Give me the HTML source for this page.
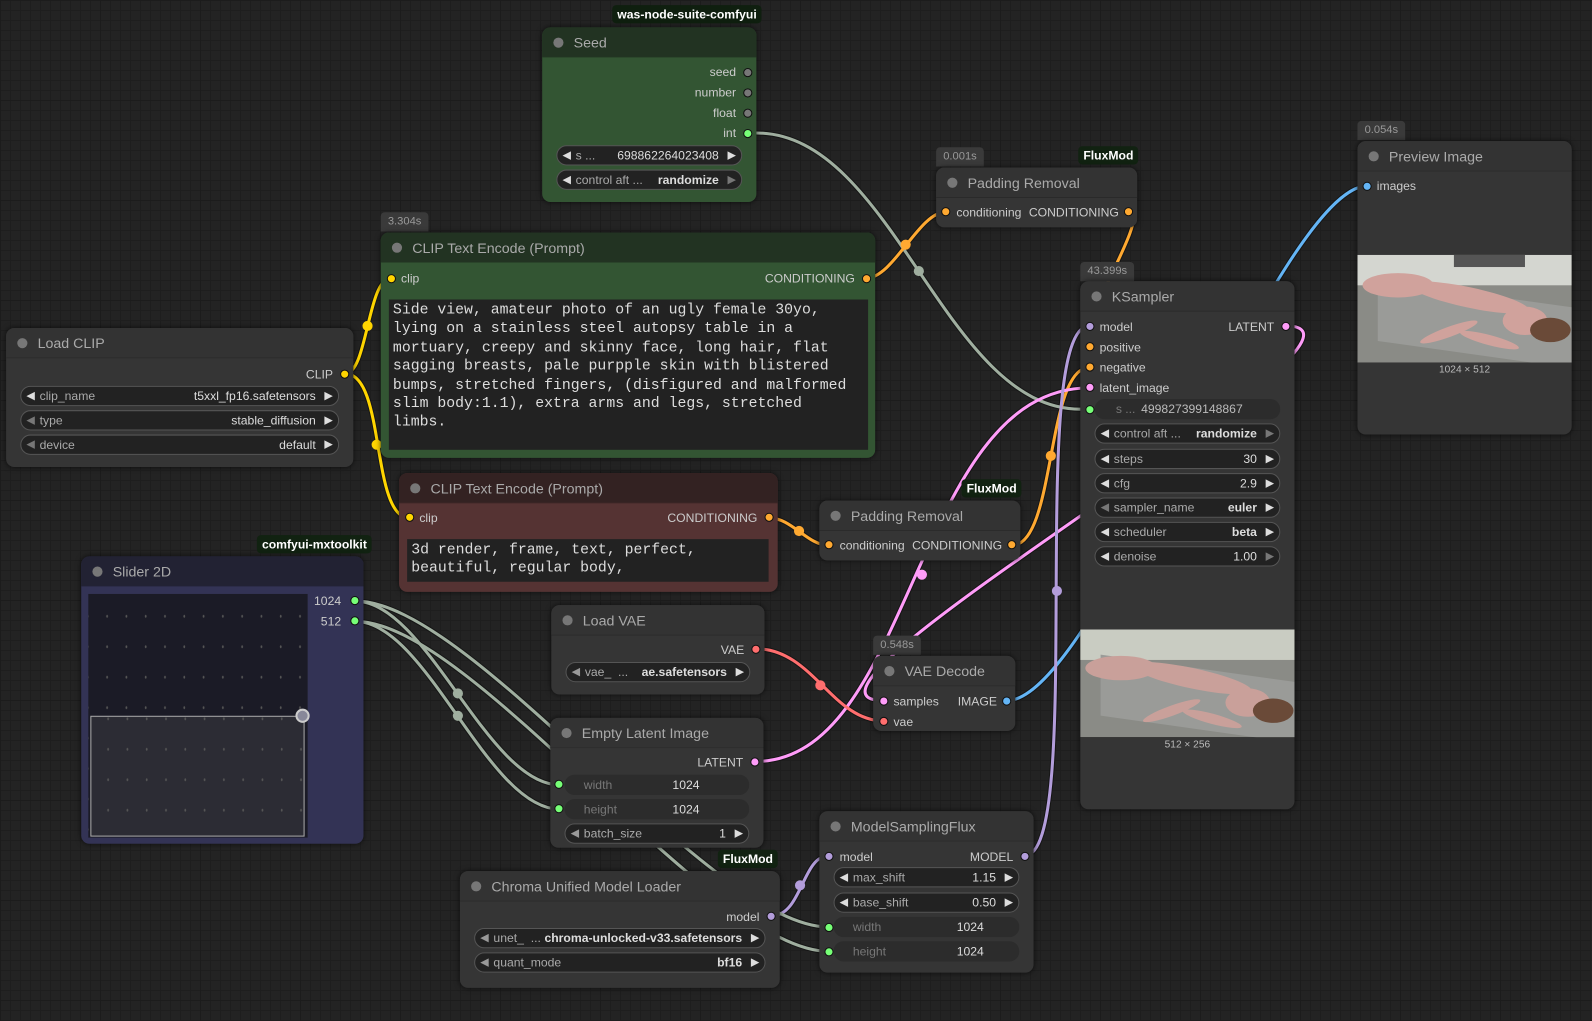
<!DOCTYPE html>
<html><head><meta charset="utf-8"><style>
*{box-sizing:border-box;margin:0;padding:0}
body{width:1592px;height:1021px;overflow:hidden;background:#222;font-family:"Liberation Sans",Arial,sans-serif;position:relative;
background-image:linear-gradient(#1c1c1c 1px,transparent 1px),linear-gradient(90deg,#1c1c1c 1px,transparent 1px),linear-gradient(#1e1e1e 1px,transparent 1px),linear-gradient(90deg,#1e1e1e 1px,transparent 1px);
background-size:100px 100px,100px 100px,10px 10px,10px 10px;background-color:#232323}
#root{position:absolute;left:0;top:0;width:1568px;height:1006px;transform:scale(1.0153);transform-origin:0 0}
.n{position:absolute;background:#353535;border-radius:8px;box-shadow:0 0 5px rgba(0,0,0,.6)}
.t{position:absolute;left:0;right:0;top:0;height:30px;background:#333;border-radius:8px 8px 0 0;border-bottom:1px solid #2b2b2b;color:#aaa;font-size:14px;line-height:30px;padding-left:31px}
.t:before{content:"";position:absolute;left:11px;top:10px;width:10px;height:10px;border-radius:50%;background:#777}
.s{position:absolute;font-size:12px;color:#ccc;white-space:nowrap;line-height:14px}
.d{position:absolute;width:9px;height:9px;border-radius:50%;border:1px solid #111}
.w{position:absolute;height:20px;border-radius:10px;background:#222;border:1px solid #555;font-size:12px;line-height:18px;color:#ddd;white-space:nowrap}
.w .l{position:absolute;left:18px;color:#aaa}
.w .v{position:absolute;right:22px;color:#ddd}
.w .a{position:absolute;left:5px;font-size:11px;color:#ddd}
.w .b{position:absolute;right:5px;font-size:11px;color:#ddd}
.w.f{border-color:transparent;background:#2c2c2c}
.w.f .l{color:#777}
.bd{position:absolute;height:18px;background:#112211;color:#fff;font-weight:bold;font-size:12px;line-height:18px;padding:0 5px;border-radius:4px}
.tm{position:absolute;height:19px;background:#3a3a3a;color:#999;font-size:11px;line-height:19px;padding:0 7px;border-radius:4px 4px 0 0}
.ta{position:absolute;background:#222;font-family:"Liberation Mono",monospace;font-size:14.6px;line-height:18.4px;color:#ddd;padding:2px 4px;white-space:pre}
svg.wires{position:absolute;left:0;top:0}
</style></head><body><div id="root">
<svg class="wires" width="1568" height="1006" viewBox="0 0 1568 1006" fill="none" stroke-linecap="round">
<g stroke="#111" stroke-width="5" opacity=".7">
<path d="M745,131 C880,131 930,403 1064,403"/>
<path d="M340,368 C362,368 362,274 385,274"/>
<path d="M340,368 C380,368 365,510 403,510"/>
<path d="M853,274 C880,274 905,209 931,209"/>
<path d="M757,510 C780,510 795,537 816,537"/>
<path d="M1112,209 C1137,209 1048,341 1073,341"/>
<path d="M997,537 C1040,537 1030,362 1073,362"/>
<path d="M744,750 C900,750 900,382 1073,382"/>
<path d="M1266,321 C1400,321 736,690 870,690"/>
<path d="M745,639 C800,639 820,710 870,710"/>
<path d="M992,690 C1080,690 1260,183 1347,183"/>
<path d="M1009,843 C1070,843 1010,321 1073,321"/>
<path d="M760,902 C790,902 790,843 816,843"/>
<path d="M350,592 C420,592 480,773 551,773"/>
<path d="M350,592 C466,592 700,913 816,913"/>
<path d="M350,612 C420,612 480,797 551,797"/>
<path d="M350,612 C466,612 700,937 816,937"/>
</g>
<g stroke-width="3">
<path stroke="#9fae9f" d="M745,131 C880,131 930,403 1064,403"/>
<path stroke="#ffd500" d="M340,368 C362,368 362,274 385,274"/>
<path stroke="#ffd500" d="M340,368 C380,368 365,510 403,510"/>
<path stroke="#ffa931" d="M853,274 C880,274 905,209 931,209"/>
<path stroke="#ffa931" d="M757,510 C780,510 795,537 816,537"/>
<path stroke="#ffa931" d="M1112,209 C1137,209 1048,341 1073,341"/>
<path stroke="#ffa931" d="M997,537 C1040,537 1030,362 1073,362"/>
<path stroke="#ff9cf9" d="M744,750 C900,750 900,382 1073,382"/>
<path stroke="#ff9cf9" d="M1266,321 C1400,321 736,690 870,690"/>
<path stroke="#ff6e6e" d="M745,639 C800,639 820,710 870,710"/>
<path stroke="#64b5f6" d="M992,690 C1080,690 1260,183 1347,183"/>
<path stroke="#b39ddb" d="M1009,843 C1070,843 1010,321 1073,321"/>
<path stroke="#b39ddb" d="M760,902 C790,902 790,843 816,843"/>
<path stroke="#9fae9f" d="M350,592 C420,592 480,773 551,773"/>
<path stroke="#9fae9f" d="M350,592 C466,592 700,913 816,913"/>
<path stroke="#9fae9f" d="M350,612 C420,612 480,797 551,797"/>
<path stroke="#9fae9f" d="M350,612 C466,612 700,937 816,937"/>
</g>
<g stroke="none">
<circle cx="905" cy="267" r="5" fill="#9fae9f"/><circle cx="362" cy="321" r="5" fill="#ffd500"/><circle cx="371" cy="438" r="5" fill="#ffd500"/>
<circle cx="892" cy="241" r="5" fill="#ffa931"/><circle cx="787" cy="523" r="5" fill="#ffa931"/><circle cx="1035" cy="449" r="5" fill="#ffa931"/>
<circle cx="908" cy="566" r="5" fill="#ff9cf9"/><circle cx="808" cy="675" r="5" fill="#ff6e6e"/><circle cx="1041" cy="582" r="5" fill="#b39ddb"/>
<circle cx="788" cy="872" r="5" fill="#b39ddb"/><circle cx="451" cy="683" r="5" fill="#9fae9f"/><circle cx="451" cy="705" r="5" fill="#9fae9f"/>
</g>
</svg>

<!-- Seed -->
<div class="bd" style="left:603px;top:5px;background:#0f1f0f">was-node-suite-comfyui</div>
<div class="n" style="left:534px;top:27px;width:211px;height:172px;background:#335533">
<div class="t" style="background:#223322;border-color:#2a442a">Seed</div>
<div class="s" style="right:20px;top:37px">seed</div><div class="d" style="right:4px;top:40px;background:#777"></div>
<div class="s" style="right:20px;top:57px">number</div><div class="d" style="right:4px;top:60px;background:#777"></div>
<div class="s" style="right:20px;top:77px">float</div><div class="d" style="right:4px;top:80px;background:#777"></div>
<div class="s" style="right:20px;top:97px">int</div><div class="d" style="right:4px;top:100px;background:#7f7"></div>
<div class="w" style="left:14px;right:14px;top:116px"><span class="a">◀</span><span class="l">s ...</span><span class="v">698862264023408</span><span class="b">▶</span></div>
<div class="w" style="left:14px;right:14px;top:140px"><span class="a">◀</span><span class="l">control aft ...</span><span class="v" style="font-weight:bold">randomize</span><span class="b" style="color:#777">▶</span></div>
</div>

<!-- CLIP Text Encode + -->
<div class="tm" style="left:375px;top:209px">3.304s</div>
<div class="n" style="left:375px;top:229px;width:487px;height:222px;background:#335533">
<div class="t" style="background:#223322;border-color:#2a442a">CLIP Text Encode (Prompt)</div>
<div class="d" style="left:6px;top:41px;background:#ffd500"></div><div class="s" style="left:20px;top:38px">clip</div>
<div class="s" style="right:20px;top:38px">CONDITIONING</div><div class="d" style="right:4px;top:41px;background:#ffa931"></div>
<div class="ta" style="left:8px;top:66px;width:472px;height:148px">Side view, amateur photo of an ugly female 30yo,
lying on a stainless steel autopsy table in a
mortuary, creepy and skinny face, long hair, flat
sagging breasts, pale purpple skin with blistered
bumps, stretched fingers, (disfigured and malformed
slim body:1.1), extra arms and legs, stretched
limbs.</div>
</div>

<!-- Load CLIP -->
<div class="n" style="left:6px;top:323px;width:342px;height:137px">
<div class="t">Load CLIP</div>
<div class="s" style="right:20px;top:39px">CLIP</div><div class="d" style="right:4px;top:41px;background:#ffd500"></div>
<div class="w" style="left:14px;right:14px;top:57px"><span class="a">◀</span><span class="l">clip_name</span><span class="v">t5xxl_fp16.safetensors</span><span class="b">▶</span></div>
<div class="w" style="left:14px;right:14px;top:81px"><span class="a" style="color:#777">◀</span><span class="l">type</span><span class="v">stable_diffusion</span><span class="b">▶</span></div>
<div class="w" style="left:14px;right:14px;top:105px"><span class="a" style="color:#777">◀</span><span class="l">device</span><span class="v">default</span><span class="b">▶</span></div>
</div>

<!-- CLIP Text Encode - -->
<div class="n" style="left:393px;top:466px;width:373px;height:117px;background:#553333">
<div class="t" style="background:#332222;border-color:#442a2a">CLIP Text Encode (Prompt)</div>
<div class="d" style="left:6px;top:39px;background:#ffd500"></div><div class="s" style="left:20px;top:37px">clip</div>
<div class="s" style="right:20px;top:37px">CONDITIONING</div><div class="d" style="right:4px;top:39px;background:#ffa931"></div>
<div class="ta" style="left:8px;top:65px;width:356px;height:42px">3d render, frame, text, perfect,
beautiful, regular body,</div>
</div>

<!-- Slider 2D -->
<div class="bd" style="left:253px;top:527px">comfyui-mxtoolkit</div>
<div class="n" style="left:80px;top:548px;width:278px;height:283px;background:#333355">
<div class="t" style="background:#222233;border-color:#2a2a44">Slider 2D</div>
<div class="s" style="right:22px;top:37px">1024</div><div class="d" style="right:4px;top:39px;background:#7f7"></div>
<div class="s" style="right:22px;top:57px">512</div><div class="d" style="right:4px;top:59px;background:#7f7"></div>
<div style="position:absolute;left:7px;top:37px;width:216px;height:240px;background:#1b1b26;background-image:radial-gradient(#555 0.7px,transparent 1.1px);background-size:19px 30px;background-position:9px 7px"></div>
<div style="position:absolute;left:9px;top:157px;width:211px;height:119px;background:#2c2c34;border:1.5px solid #aaa;background-image:radial-gradient(#555 0.7px,transparent 1.1px);background-size:19px 30px;background-position:7px 17px"></div>
<div style="position:absolute;left:211px;top:150px;width:14px;height:14px;border-radius:50%;background:#889;border:2px solid #ccc"></div>
</div>

<!-- Load VAE -->
<div class="n" style="left:543px;top:596px;width:210px;height:88px">
<div class="t">Load VAE</div>
<div class="s" style="right:20px;top:37px">VAE</div><div class="d" style="right:4px;top:39px;background:#ff6e6e"></div>
<div class="w" style="left:14px;right:14px;top:56px"><span class="a" style="color:#999">◀</span><span class="l">vae_ &nbsp;...</span><span class="v" style="font-weight:bold">ae.safetensors</span><span class="b">▶</span></div>
</div>

<!-- Empty Latent -->
<div class="n" style="left:542px;top:707px;width:210px;height:128px">
<div class="t">Empty Latent Image</div>
<div class="s" style="right:20px;top:37px">LATENT</div><div class="d" style="right:4px;top:39px;background:#ff9cf9"></div>
<div class="d" style="left:4px;top:61px;background:#7f7"></div>
<div class="w f" style="left:14px;right:14px;top:56px"><span class="l">width</span><span class="v" style="right:48px">1024</span></div>
<div class="d" style="left:4px;top:85px;background:#7f7"></div>
<div class="w f" style="left:14px;right:14px;top:80px"><span class="l">height</span><span class="v" style="right:48px">1024</span></div>
<div class="w" style="left:14px;right:14px;top:104px"><span class="a" style="color:#999">◀</span><span class="l">batch_size</span><span class="v">1</span><span class="b">▶</span></div>
</div>

<!-- Chroma -->
<div class="bd" style="left:707px;top:837px">FluxMod</div>
<div class="n" style="left:453px;top:858px;width:315px;height:115px">
<div class="t">Chroma Unified Model Loader</div>
<div class="s" style="right:20px;top:38px">model</div><div class="d" style="right:4px;top:40px;background:#b39ddb"></div>
<div class="w" style="left:14px;right:14px;top:56px"><span class="a" style="color:#999">◀</span><span class="l">unet_ &nbsp;...</span><span class="v" style="font-weight:bold">chroma-unlocked-v33.safetensors</span><span class="b">▶</span></div>
<div class="w" style="left:14px;right:14px;top:80px"><span class="a" style="color:#999">◀</span><span class="l">quant_mode</span><span class="v" style="font-weight:bold">bf16</span><span class="b">▶</span></div>
</div>

<!-- Padding Removal 1 -->
<div class="tm" style="left:922px;top:145px">0.001s</div>
<div class="bd" style="left:1062px;top:144px">FluxMod</div>
<div class="n" style="left:922px;top:165px;width:198px;height:59px">
<div class="t">Padding Removal</div>
<div class="d" style="left:5px;top:39px;background:#ffa931"></div><div class="s" style="left:20px;top:37px">conditioning</div>
<div class="s" style="right:18px;top:37px">CONDITIONING</div><div class="d" style="right:4px;top:39px;background:#ffa931"></div>
</div>

<!-- Padding Removal 2 -->
<div class="bd" style="left:947px;top:472px">FluxMod</div>
<div class="n" style="left:807px;top:493px;width:198px;height:59px">
<div class="t">Padding Removal</div>
<div class="d" style="left:5px;top:39px;background:#ffa931"></div><div class="s" style="left:20px;top:37px">conditioning</div>
<div class="s" style="right:18px;top:37px">CONDITIONING</div><div class="d" style="right:4px;top:39px;background:#ffa931"></div>
</div>

<!-- VAE Decode -->
<div class="tm" style="left:860px;top:626px">0.548s</div>
<div class="n" style="left:860px;top:646px;width:140px;height:74px">
<div class="t">VAE Decode</div>
<div class="d" style="left:6px;top:40px;background:#ff9cf9"></div><div class="s" style="left:20px;top:38px">samples</div>
<div class="s" style="right:18px;top:38px">IMAGE</div><div class="d" style="right:4px;top:40px;background:#64b5f6"></div>
<div class="d" style="left:6px;top:60px;background:#ff6e6e"></div><div class="s" style="left:20px;top:58px">vae</div>
</div>

<!-- ModelSamplingFlux -->
<div class="n" style="left:807px;top:799px;width:211px;height:159px">
<div class="t">ModelSamplingFlux</div>
<div class="d" style="left:5px;top:40px;background:#b39ddb"></div><div class="s" style="left:20px;top:38px">model</div>
<div class="s" style="right:20px;top:38px">MODEL</div><div class="d" style="right:4px;top:40px;background:#b39ddb"></div>
<div class="w" style="left:14px;right:14px;top:55px"><span class="a">◀</span><span class="l">max_shift</span><span class="v">1.15</span><span class="b">▶</span></div>
<div class="w" style="left:14px;right:14px;top:80px"><span class="a">◀</span><span class="l">base_shift</span><span class="v">0.50</span><span class="b">▶</span></div>
<div class="d" style="left:5px;top:110px;background:#7f7"></div>
<div class="w f" style="left:14px;right:14px;top:104px"><span class="l">width</span><span class="v" style="right:34px">1024</span></div>
<div class="d" style="left:5px;top:134px;background:#7f7"></div>
<div class="w f" style="left:14px;right:14px;top:128px"><span class="l">height</span><span class="v" style="right:34px">1024</span></div>
</div>

<!-- KSampler -->
<div class="tm" style="left:1064px;top:258px">43.399s</div>
<div class="n" style="left:1064px;top:277px;width:211px;height:520px">
<div class="t">KSampler</div>
<div class="d" style="left:5px;top:40px;background:#b39ddb"></div><div class="s" style="left:19px;top:38px">model</div>
<div class="s" style="right:20px;top:38px">LATENT</div><div class="d" style="right:4px;top:40px;background:#ff9cf9"></div>
<div class="d" style="left:5px;top:60px;background:#ffa931"></div><div class="s" style="left:19px;top:58px">positive</div>
<div class="d" style="left:5px;top:80px;background:#ffa931"></div><div class="s" style="left:19px;top:78px">negative</div>
<div class="d" style="left:5px;top:100px;background:#ff9cf9"></div><div class="s" style="left:19px;top:98px">latent_image</div>
<div class="d" style="left:5px;top:122px;background:#7f7"></div>
<div class="w f" style="left:14px;right:14px;top:116px"><span class="l" style="left:20px">s ...</span><span class="v" style="right:36px;color:#bbb">499827399148867</span></div>
<div class="w" style="left:14px;right:14px;top:140px"><span class="a">◀</span><span class="l">control aft ...</span><span class="v" style="font-weight:bold">randomize</span><span class="b" style="color:#777">▶</span></div>
<div class="w" style="left:14px;right:14px;top:165px"><span class="a">◀</span><span class="l">steps</span><span class="v">30</span><span class="b">▶</span></div>
<div class="w" style="left:14px;right:14px;top:189px"><span class="a">◀</span><span class="l">cfg</span><span class="v">2.9</span><span class="b">▶</span></div>
<div class="w" style="left:14px;right:14px;top:213px"><span class="a" style="color:#777">◀</span><span class="l">sampler_name</span><span class="v" style="font-weight:bold">euler</span><span class="b">▶</span></div>
<div class="w" style="left:14px;right:14px;top:237px"><span class="a">◀</span><span class="l">scheduler</span><span class="v" style="font-weight:bold">beta</span><span class="b">▶</span></div>
<div class="w" style="left:14px;right:14px;top:261px"><span class="a">◀</span><span class="l">denoise</span><span class="v">1.00</span><span class="b" style="color:#777">▶</span></div>
<svg style="position:absolute;left:0;top:343px" width="211" height="106" viewBox="0 0 211 106">
<rect width="211" height="106" fill="#8a8b86"/><rect width="211" height="30" fill="#c9ccc2"/><rect x="20" y="22" width="191" height="60" fill="#9a9b98" transform="skewY(8)"/>
<g fill="#c9a09a"><ellipse cx="40" cy="38" rx="35" ry="12"/><ellipse cx="110" cy="48" rx="60" ry="10" transform="rotate(12 110 48)"/><ellipse cx="165" cy="72" rx="22" ry="14"/><ellipse cx="90" cy="80" rx="30" ry="5" transform="rotate(-20 90 80)"/><ellipse cx="130" cy="88" rx="30" ry="5" transform="rotate(15 130 88)"/></g>
<ellipse cx="190" cy="80" rx="20" ry="12" fill="#6a4a38"/></svg>
<div class="s" style="left:0;right:0;top:450px;text-align:center;font-size:10px;color:#bbb">512 × 256</div>
</div>

<!-- Preview Image -->
<div class="tm" style="left:1337px;top:119px">0.054s</div>
<div class="n" style="left:1337px;top:139px;width:211px;height:289px">
<div class="t">Preview Image</div>
<div class="d" style="left:5px;top:40px;background:#64b5f6"></div><div class="s" style="left:19px;top:37px">images</div>
<svg style="position:absolute;left:0;top:112px" width="211" height="106" viewBox="0 0 211 106">
<rect width="211" height="106" fill="#8a8b86"/><rect width="211" height="30" fill="#d4d6d0"/><rect x="95" y="0" width="70" height="12" fill="#555"/><rect x="20" y="22" width="191" height="60" fill="#9a9b98" transform="skewY(8)"/>
<g fill="#d0a29c"><ellipse cx="40" cy="30" rx="35" ry="12"/><ellipse cx="110" cy="42" rx="60" ry="10" transform="rotate(12 110 42)"/><ellipse cx="165" cy="65" rx="22" ry="14"/><ellipse cx="90" cy="76" rx="30" ry="5" transform="rotate(-20 90 76)"/><ellipse cx="130" cy="84" rx="30" ry="5" transform="rotate(15 130 84)"/></g>
<ellipse cx="190" cy="74" rx="20" ry="12" fill="#6a4a38"/></svg>
<div class="s" style="left:0;right:0;top:219px;text-align:center;font-size:10px;color:#bbb">1024 × 512</div>
</div>
</div></body></html>
